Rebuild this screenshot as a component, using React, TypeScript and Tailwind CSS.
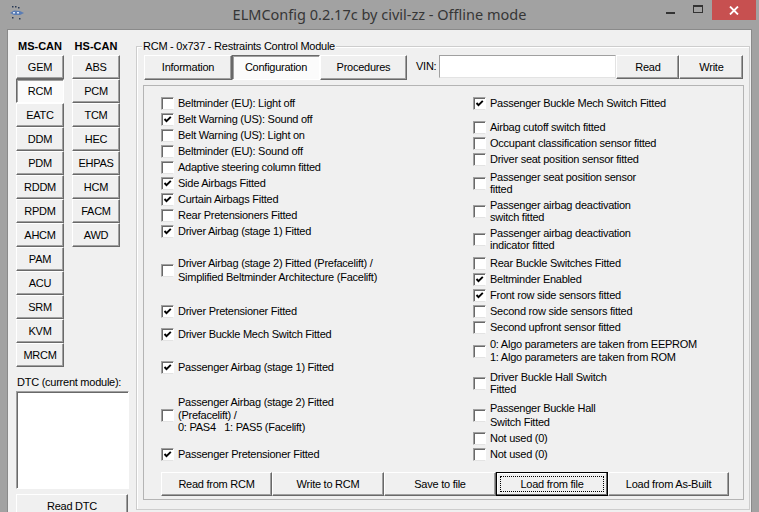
import React from 'react';

type Item = { lines: string[]; on?: boolean; cls: string };

const msCan = ['GEM', 'RCM', 'EATC', 'DDM', 'PDM', 'RDDM', 'RPDM', 'AHCM', 'PAM', 'ACU', 'SRM', 'KVM', 'MRCM'];
const hsCan = ['ABS', 'PCM', 'TCM', 'HEC', 'EHPAS', 'HCM', 'FACM', 'AWD'];

const leftItems: Item[] = [
  { lines: ['Beltminder (EU): Light off'], cls: 'h-[16px]' },
  { lines: ['Belt Warning (US): Sound off'], on: true, cls: 'h-[16px]' },
  { lines: ['Belt Warning (US): Light on'], cls: 'h-[16px]' },
  { lines: ['Beltminder (EU): Sound off'], cls: 'h-[16px]' },
  { lines: ['Adaptive steering column fitted'], cls: 'h-[16px]' },
  { lines: ['Side Airbags Fitted'], on: true, cls: 'h-[16px]' },
  { lines: ['Curtain Airbags Fitted'], on: true, cls: 'h-[16px]' },
  { lines: ['Rear Pretensioners Fitted'], cls: 'h-[16px]' },
  { lines: ['Driver Airbag (stage 1) Fitted'], on: true, cls: 'h-[16px]' },
  {
    lines: ['Driver Airbag (stage 2) Fitted (Prefacelift) /', 'Simplified Beltminder Architecture (Facelift)'],
    cls: 'mt-[17px] h-[28px] leading-[14px]',
  },
  { lines: ['Driver Pretensioner Fitted'], on: true, cls: 'mt-[19px] h-[16px]' },
  { lines: ['Driver Buckle Mech Switch Fitted'], on: true, cls: 'mt-[7px] h-[16px]' },
  { lines: ['Passenger Airbag (stage 1) Fitted'], on: true, cls: 'mt-[17px] h-[16px]' },
  {
    lines: ['Passenger Airbag (stage 2) Fitted', '(Prefacelift) /', '0: PAS4\u00a0\u00a0\u00a01: PAS5 (Facelift)'],
    cls: 'mt-[21px] h-[38px] leading-[12.5px]',
  },
  { lines: ['Passenger Pretensioner Fitted'], on: true, cls: 'mt-[12px] h-[16px]' },
];

const rightItems: Item[] = [
  { lines: ['Passenger Buckle Mech Switch Fitted'], on: true, cls: 'h-[16px]' },
  { lines: ['Airbag cutoff switch fitted'], cls: 'mt-[8px] h-[16px]' },
  { lines: ['Occupant classification sensor fitted'], cls: 'h-[16px]' },
  { lines: ['Driver seat position sensor fitted'], cls: 'h-[16px]' },
  { lines: ['Passenger seat position sensor', 'fitted'], cls: 'mt-[3px] h-[26px] leading-[12px]' },
  { lines: ['Passenger airbag deactivation', 'switch fitted'], cls: 'mt-[2px] h-[26px] leading-[12px]' },
  { lines: ['Passenger airbag deactivation', 'indicator fitted'], cls: 'mt-[2px] h-[26px] leading-[12px]' },
  { lines: ['Rear Buckle Switches Fitted'], cls: 'mt-[3px] h-[16px]' },
  { lines: ['Beltminder Enabled'], on: true, cls: 'h-[16px]' },
  { lines: ['Front row side sensors fitted'], on: true, cls: 'h-[16px]' },
  { lines: ['Second row side sensors fitted'], cls: 'h-[16px]' },
  { lines: ['Second upfront sensor fitted'], cls: 'h-[16px]' },
  {
    lines: ['0: Algo parameters are taken from EEPROM', '1: Algo parameters are taken from ROM'],
    cls: 'mt-[3px] h-[26px] leading-[13px]',
  },
  { lines: ['Driver Buckle Hall Switch', 'Fitted'], cls: 'mt-[6px] h-[26px] leading-[12px]' },
  { lines: ['Passenger Buckle Hall', 'Switch Fitted'], cls: 'mt-[5px] h-[28px] leading-[14px]' },
  { lines: ['Not used (0)'], cls: 'mt-[2px] h-[15px]' },
  { lines: ['Not used (0)'], cls: 'h-[16px]' },
];

const raised =
  'bg-[#f0f0f0] border border-t-white border-l-white border-r-[#696969] border-b-[#696969] shadow-[inset_-1px_-1px_0_#a0a0a0]';
const sunken =
  'bg-[#fbfbfb] border border-t-[#696969] border-l-[#696969] border-r-white border-b-white shadow-[inset_1px_1px_0_#a0a0a0]';

function Btn({ label, pressed, className = '' }: { label: string; pressed?: boolean; className?: string }) {
  return (
    <div className={`flex items-center justify-center shrink-0 text-black ${pressed ? sunken : raised} ${className}`}>
      {label}
    </div>
  );
}

function Check({ on }: { on?: boolean }) {
  return (
    <div className="w-[13px] h-[13px] shrink-0 bg-white border border-t-[#a0a0a0] border-l-[#a0a0a0] border-r-white border-b-[#e3e3e3] shadow-[inset_1px_1px_0_#696969]">
      {on && (
        <svg width="11" height="11" viewBox="0 0 11 11" className="block">
          <polyline points="2.5,5 4.5,7.2 8.8,2.8" fill="none" stroke="#000" strokeWidth="1.9" />
        </svg>
      )}
    </div>
  );
}

function Row({ item, gap }: { item: Item; gap: string }) {
  return (
    <div className={`flex items-center ${item.cls}`}>
      <Check on={item.on} />
      <div className={`${gap} whitespace-nowrap`}>
        {item.lines.map((l, i) => (
          <div key={i}>{l}</div>
        ))}
      </div>
    </div>
  );
}

export default function App() {
  return (
    <div className="w-[759px] h-[512px] overflow-hidden bg-[#a2a2a2] flex flex-col font-['Liberation_Sans',Arial,sans-serif] text-[11px] tracking-[-0.25px] text-black">
      {/* Title bar */}
      <div className="h-[29px] shrink-0 grid grid-cols-[1fr_auto_1fr]">
        <div className="pl-[9px] pt-[5px]">
          <svg width="16" height="16" viewBox="0 0 16 16">
            <rect x="3" y="1" width="1.5" height="1.5" fill="#2a3a55" />
            <rect x="6" y="1" width="1.5" height="1.5" fill="#2a3a55" />
            <rect x="9" y="2" width="1.5" height="1.5" fill="#2a3a55" />
            <path d="M1 8 L5 5.5 L11 6 L15 8 L11 10 L5 10 Z" fill="#5a7db5" />
            <rect x="4" y="7" width="2" height="1.5" fill="#dce6f5" />
            <rect x="8" y="7" width="2" height="1.5" fill="#dce6f5" />
            <rect x="3" y="12" width="1.5" height="1.5" fill="#2a3a55" />
            <rect x="10" y="13" width="1.5" height="1.5" fill="#2a3a55" />
          </svg>
        </div>
        <div className="pt-[4px] text-[14.5px] tracking-normal text-[#363636] font-['Noto_Sans',sans-serif] leading-[20px]">
          ELMConfig 0.2.17c by civil-zz - Offline mode
        </div>
        <div className="flex justify-end items-start pr-[3px]">
          <div className="w-[28px] h-[20px] flex justify-center pt-[12px]">
            <div className="w-[9px] h-[2px] bg-[#333]" />
          </div>
          <div className="w-[28px] h-[20px] flex justify-center pt-[5px]">
            <div className="w-[10px] h-[8px] border border-t-2 border-[#333]" />
          </div>
          <div className="w-[44px] h-[20px] bg-[#c75050] flex items-center justify-center">
            <svg width="10" height="9" viewBox="0 0 10 9">
              <path d="M1 0.5 L9 8.5 M9 0.5 L1 8.5" stroke="#fff" strokeWidth="1.8" />
            </svg>
          </div>
        </div>
      </div>

      {/* Client area */}
      <div className="flex-1 mx-[7px] bg-[#f0f0f0] border-t border-l border-r border-[#8a8a8a] flex">
        {/* Module list */}
        <div className="w-[128px] shrink-0 pl-[8px] pt-[9px] flex flex-col">
          <div className="flex gap-[8px] items-start">
            <div className="w-[48px] flex flex-col">
              <div className="h-[14px] leading-[14px] font-bold text-center tracking-normal">MS-CAN</div>
              <div className="mt-[2px] flex flex-col">
                {msCan.map((m) => (
                  <Btn key={m} label={m} pressed={m === 'RCM'} className="h-[24px] w-[48px]" />
                ))}
              </div>
            </div>
            <div className="w-[48px] flex flex-col">
              <div className="h-[14px] leading-[14px] font-bold text-center tracking-normal">HS-CAN</div>
              <div className="mt-[2px] flex flex-col">
                {hsCan.map((m) => (
                  <Btn key={m} label={m} className="h-[24px] w-[48px]" />
                ))}
              </div>
            </div>
          </div>
          <div className="mt-[8px] h-[14px] leading-[14px] pl-[1px]">DTC (current module):</div>
          <div className="mt-[2px] w-[113px] h-[98px] bg-white border border-t-[#a0a0a0] border-l-[#a0a0a0] border-r-white border-b-white shadow-[inset_1px_1px_0_#696969]" />
          <Btn label="Read DTC" className="mt-[5px] w-[112px] h-[24px]" />
        </div>

        {/* Group box */}
        <div className="relative mt-[16px] w-[614px] h-[464px] shrink-0 border border-[#cdcdcd] shadow-[inset_1px_1px_0_#fff] pl-[6px] pt-[8px]">
          <div className="absolute -top-[8px] left-[5px] px-[1px] bg-[#f0f0f0] leading-[14px]">
            RCM - 0x737 - Restraints Control Module
          </div>

          {/* Tabs + VIN */}
          <div className="flex items-start pl-[1px]">
            <Btn label="Information" className="w-[88px] h-[25px]" />
            <Btn label="Configuration" pressed className="w-[88px] h-[25px]" />
            <Btn label="Procedures" className="w-[87px] h-[25px]" />
            <div className="ml-[9px] h-[24px] leading-[24px] -mt-[1px]">VIN:</div>
            <div className="ml-[3px] w-[177px] h-[23px] bg-white border border-t-[#a0a0a0] border-l-[#a0a0a0] border-r-[#e3e3e3] border-b-[#e3e3e3]" />
            <Btn label="Read" className="w-[63px] h-[24px]" />
            <Btn label="Write" className="w-[64px] h-[24px]" />
          </div>

          {/* Configuration page */}
          <div className="mt-[5px] w-[601px] h-[415px] border border-[#b4b4b4] pl-[17px] pt-[9px] flex flex-col">
            <div className="flex">
              <div className="w-[311px] flex flex-col">
                {leftItems.map((it, i) => (
                  <Row key={i} item={it} gap="ml-[4px]" />
                ))}
              </div>
              <div className="flex-1 pl-[1px] flex flex-col">
                {rightItems.map((it, i) => (
                  <Row key={i} item={it} gap="ml-[4px]" />
                ))}
              </div>
            </div>
            <div className="mt-[10px] flex">
              <Btn label="Read from RCM" className="w-[111px] h-[24px]" />
              <Btn label="Write to RCM" className="w-[112px] h-[24px]" />
              <Btn label="Save to file" className="w-[112px] h-[24px]" />
              <div className="w-[112px] h-[24px] border border-black bg-[#f0f0f0] p-[3px] shadow-[inset_-1px_-1px_0_#696969,inset_1px_1px_0_#fff]">
                <div className="w-full h-full border border-dotted border-black flex items-center justify-center">
                  Load from file
                </div>
              </div>
              <Btn label="Load from As-Built" className="w-[121px] h-[24px]" />
            </div>
          </div>
        </div>
      </div>
    </div>
  );
}
